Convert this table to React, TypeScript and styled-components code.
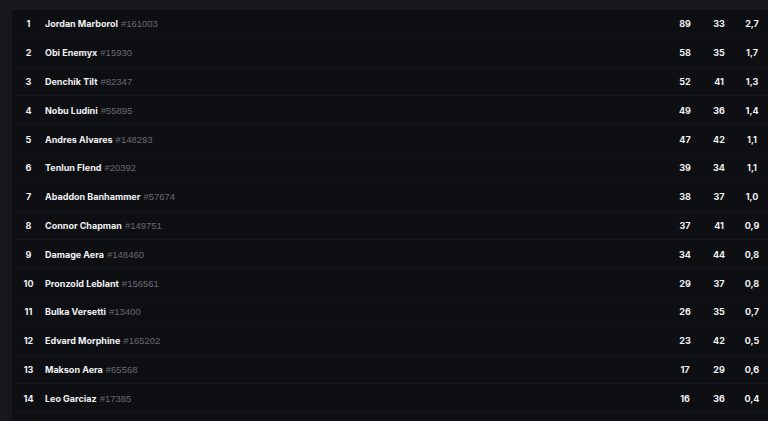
import styled, { createGlobalStyle } from 'styled-components';

type Player = {
  name: string;
  tag: string;
  kills: number;
  deaths: number;
  ratio: string;
};

const players: Player[] = [
  { name: 'Jordan Marborol', tag: '161003', kills: 89, deaths: 33, ratio: '2,7' },
  { name: 'Obi Enemyx', tag: '15930', kills: 58, deaths: 35, ratio: '1,7' },
  { name: 'Denchik Tilt', tag: '82347', kills: 52, deaths: 41, ratio: '1,3' },
  { name: 'Nobu Ludini', tag: '55895', kills: 49, deaths: 36, ratio: '1,4' },
  { name: 'Andres Alvares', tag: '148293', kills: 47, deaths: 42, ratio: '1,1' },
  { name: 'Tenlun Flend', tag: '20392', kills: 39, deaths: 34, ratio: '1,1' },
  { name: 'Abaddon Banhammer', tag: '57674', kills: 38, deaths: 37, ratio: '1,0' },
  { name: 'Connor Chapman', tag: '149751', kills: 37, deaths: 41, ratio: '0,9' },
  { name: 'Damage Aera', tag: '148460', kills: 34, deaths: 44, ratio: '0,8' },
  { name: 'Pronzold Leblant', tag: '156561', kills: 29, deaths: 37, ratio: '0,8' },
  { name: 'Bulka Versetti', tag: '13400', kills: 26, deaths: 35, ratio: '0,7' },
  { name: 'Edvard Morphine', tag: '165202', kills: 23, deaths: 42, ratio: '0,5' },
  { name: 'Makson Aera', tag: '65568', kills: 17, deaths: 29, ratio: '0,6' },
  { name: 'Leo Garciaz', tag: '17385', kills: 16, deaths: 36, ratio: '0,4' },
];

const GlobalStyle = createGlobalStyle`
  html, body {
    margin: 0;
    padding: 0;
    background: #17181c;
  }
  body {
    font-family: Inter, 'Noto Sans', sans-serif;
  }
`;

const Page = styled.div`
  height: 421px;
  overflow-y: auto;
  background: #17181c;
  padding: 10px 0 0 12px;
  box-sizing: border-box;

  &::-webkit-scrollbar {
    width: 11px;
  }
  &::-webkit-scrollbar-track {
    background: #17181c;
    border-left: 1px solid #1f2024;
  }
  &::-webkit-scrollbar-thumb {
    background: #3b3c41;
    background-clip: content-box;
    border-left: 1px solid transparent;
    border-right: 7px solid transparent;
  }
`;

const Board = styled.div`
  background: #0e0f13;
  padding-bottom: 30px;
`;

const Row = styled.div`
  display: grid;
  grid-template-columns: 33px 1fr 34px 34px 32px;
  align-items: center;
  height: 28.8px;
  box-sizing: border-box;
  border-bottom: 1px solid #15161a;
  font-size: 9px;
  font-weight: 700;
  color: #f1f1f3;
`;

const Rank = styled.span`
  text-align: center;
`;

const Name = styled.span`
  white-space: nowrap;
`;

const Tag = styled.span`
  font-family: 'Liberation Sans', Arial, sans-serif;
  color: #686a72;
  font-weight: 400;
  font-size: 9.5px;
  margin-left: 3px;
`;

const Stat = styled.span`
  text-align: center;
`;

export default function App() {
  return (
    <>
      <GlobalStyle />
      <Page>
        <Board>
          {players.map((p, i) => (
            <Row key={p.tag}>
              <Rank>{i + 1}</Rank>
              <Name>
                {p.name}
                <Tag>#{p.tag}</Tag>
              </Name>
              <Stat>{p.kills}</Stat>
              <Stat>{p.deaths}</Stat>
              <Stat>{p.ratio}</Stat>
            </Row>
          ))}
        </Board>
      </Page>
    </>
  );
}
